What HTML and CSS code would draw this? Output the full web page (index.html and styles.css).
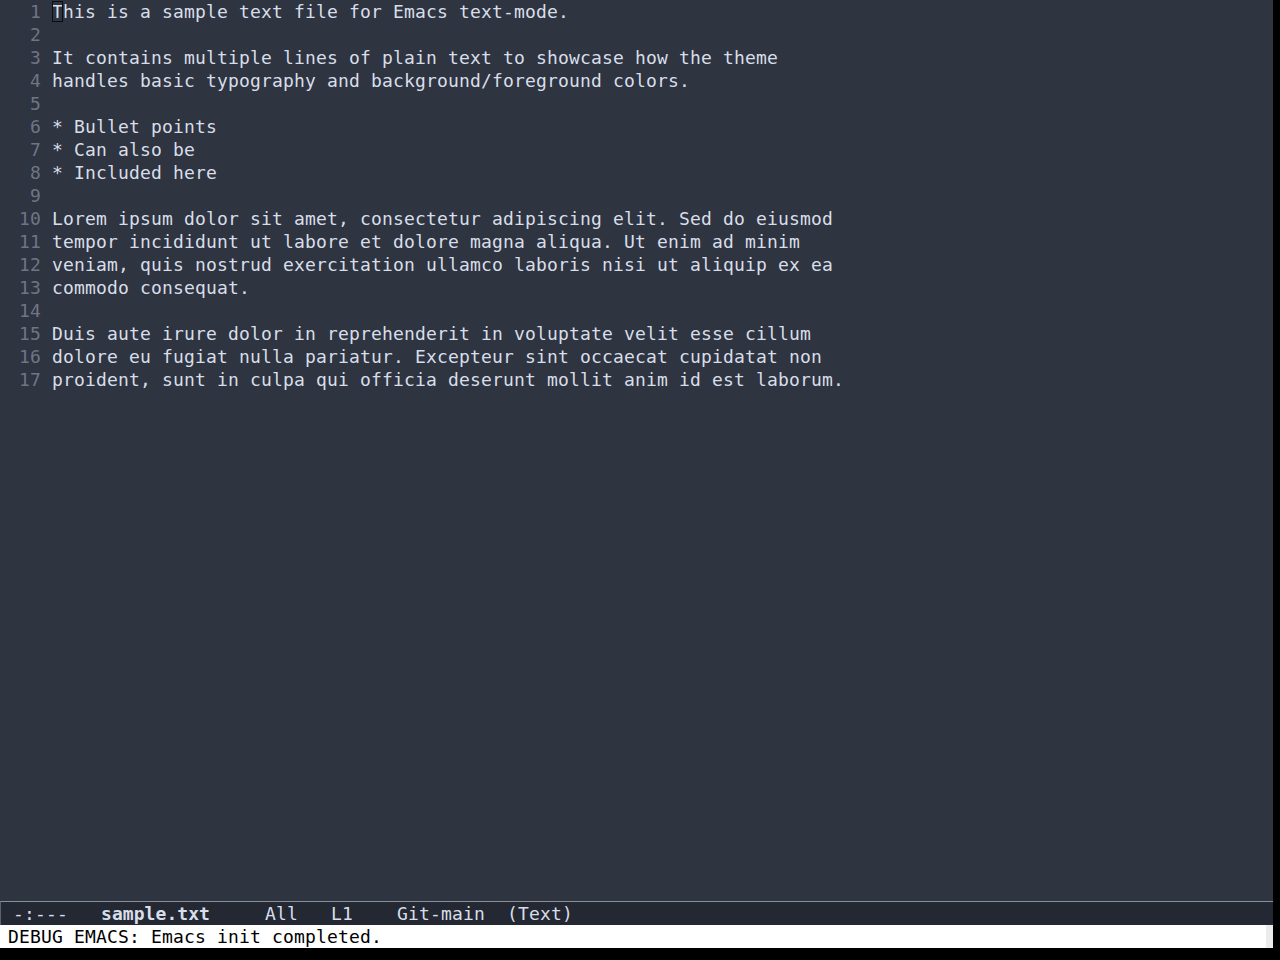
FILE: index.html
```html
<!DOCTYPE html>
<html>
<head>
<meta charset="utf-8">
<link rel="stylesheet" href="styles.css">
</head>
<body>
<div class="frame">
  <div class="window">
    <div class="line"><span class="num">1</span><span class="text"><span class="cursor">T</span>his is a sample text file for Emacs text-mode.</span></div>
    <div class="line"><span class="num">2</span><span class="text"></span></div>
    <div class="line"><span class="num">3</span><span class="text">It contains multiple lines of plain text to showcase how the theme</span></div>
    <div class="line"><span class="num">4</span><span class="text">handles basic typography and background/foreground colors.</span></div>
    <div class="line"><span class="num">5</span><span class="text"></span></div>
    <div class="line"><span class="num">6</span><span class="text">* Bullet points</span></div>
    <div class="line"><span class="num">7</span><span class="text">* Can also be</span></div>
    <div class="line"><span class="num">8</span><span class="text">* Included here</span></div>
    <div class="line"><span class="num">9</span><span class="text"></span></div>
    <div class="line"><span class="num">10</span><span class="text">Lorem ipsum dolor sit amet, consectetur adipiscing elit. Sed do eiusmod</span></div>
    <div class="line"><span class="num">11</span><span class="text">tempor incididunt ut labore et dolore magna aliqua. Ut enim ad minim</span></div>
    <div class="line"><span class="num">12</span><span class="text">veniam, quis nostrud exercitation ullamco laboris nisi ut aliquip ex ea</span></div>
    <div class="line"><span class="num">13</span><span class="text">commodo consequat.</span></div>
    <div class="line"><span class="num">14</span><span class="text"></span></div>
    <div class="line"><span class="num">15</span><span class="text">Duis aute irure dolor in reprehenderit in voluptate velit esse cillum</span></div>
    <div class="line"><span class="num">16</span><span class="text">dolore eu fugiat nulla pariatur. Excepteur sint occaecat cupidatat non</span></div>
    <div class="line"><span class="num">17</span><span class="text">proident, sunt in culpa qui officia deserunt mollit anim id est laborum.</span></div>
  </div>
  <div class="modeline"><span class="ml"> -:---   </span><span class="ml bold">sample.txt</span><span class="ml">     All   L1    Git-main  (Text)</span></div>
  <div class="echo">DEBUG EMACS: Emacs init completed.</div>
</div>
</body>
</html>
```
FILE: styles.css
```css
html, body {
  margin: 0;
  padding: 0;
  background: #000000;
}
.frame {
  width: 1273px;
  height: 948px;
  display: flex;
  flex-direction: column;
  font-family: "DejaVu Sans Mono", monospace;
  font-size: 18px;
  letter-spacing: 0.164px;
  line-height: 23px;
}
.window {
  flex: 1;
  background: #2e3440;
  color: #d8dee9;
  overflow: hidden;
}
.line {
  display: flex;
  height: 23px;
}
.num {
  width: 41px;
  padding-right: 11px;
  text-align: right;
  color: #6e7686;
  flex: none;
}
.text {
  white-space: pre;
}
.cursor {
  outline: 1px solid #0b0d10;
  outline-offset: -1px;
  box-shadow: inset 0 0 0 1px #0b0d10;
}
.modeline {
  height: 23px;
  background: #232832;
  border-top: 1px solid #8a909a;
  border-left: 1px solid #5c6370;
  color: #d8dee9;
  white-space: pre;
  padding-left: 1px;
}
.bold {
  font-weight: bold;
  letter-spacing: 0.064px;
}
.echo {
  height: 23px;
  background: #ffffff;
  color: #000000;
  padding-left: 8px;
  white-space: pre;
  border-right: 7px solid #ececec;
}
```
